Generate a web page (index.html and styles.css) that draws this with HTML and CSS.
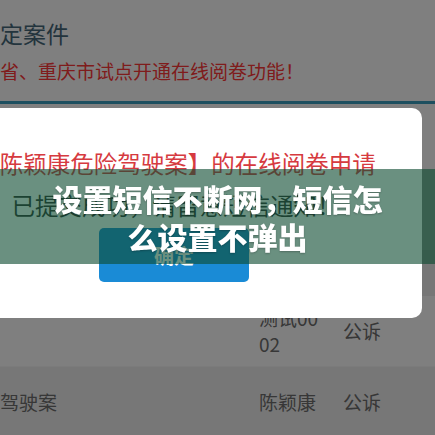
FILE: index.html
```html
<!DOCTYPE html>
<html lang="zh-CN">

<head>
    <meta charset="UTF-8">
    <meta name="viewport" content="width=device-width, initial-scale=1.0">
    <title>设置短信不断网，短信怎么设置不弹出</title>
    <link rel="stylesheet" href="styles.css">
</head>

<body>

    <div class="pagina">
        <h2 class="titulo">定案件</h2>
        <p class="aviso">省、重庆市试点开通在线阅卷功能！</p>
        <div class="linha"></div>

        <div class="tabela">
            <div class="linha-tabela cabecalho">
                <span>案件名称</span>
                <span>被告人</span>
                <span>类型</span>
            </div>
            <div class="linha-tabela">
                <span></span>
                <span class="nome">测试0002</span>
                <span>公诉</span>
            </div>
            <div class="linha-tabela alternada">
                <span>驾驶案</span>
                <span class="nome">陈颖康</span>
                <span>公诉</span>
            </div>
        </div>
    </div>

    <div class="mascara"></div>

    <div class="dialogo">
        <p class="mensagem">
            <span class="destaque">【陈颖康危险驾驶案】的在线阅卷申请</span><br>
            已提交成功，请留意短信通知！
        </p>
        <button class="btn-confirmar">确定</button>
    </div>

    <div class="faixa">
        <h1>设置短信不断网，短信怎么设置不弹出</h1>
    </div>

</body>

</html>
```

FILE: styles.css
```css
html,
body {
    margin: 0;
    height: 100%;
    overflow: hidden;
}

body {
    background-color: #fff;
    font-family: "Noto Sans CJK SC", "Noto Sans", sans-serif;
}

.pagina {
    height: 435px;
    overflow: hidden;
}

.titulo {
    margin: 0;
    padding-top: 13px;
    font-size: 23px;
    font-weight: normal;
    line-height: 40px;
    color: #46687a;
}

.aviso {
    margin: 3px 0 0;
    font-size: 19px;
    line-height: 30px;
    color: #ff3838;
}

.linha {
    margin-top: 15px;
    height: 3px;
    background-color: #3a9ebe;
}

.tabela {
    margin-top: 146px;
}

.linha-tabela {
    display: grid;
    grid-template-columns: 259px 84px 1fr;
    align-items: center;
    height: 70px;
    font-size: 19px;
    line-height: 26px;
    color: #6e6e6e;
}

.linha-tabela .nome {
    width: 64px;
    word-break: break-all;
}

.cabecalho {
    height: 46px;
    background-color: #eee;
}

.alternada {
    height: 69px;
    background-color: #eee;
    border-top: 1px solid #f6f6f6;
}

.mascara {
    position: fixed;
    top: 0;
    left: 0;
    right: 0;
    bottom: 0;
    background-color: rgba(0, 0, 0, 0.5);
}

/* caixa de aviso, centrada fora da tela à esquerda */
.dialogo {
    position: absolute;
    left: -74px;
    top: 108px;
    width: 496px;
    height: 210px;
    box-sizing: border-box;
    padding-top: 34px;
    background-color: #fff;
    border-radius: 10px;
    text-align: center;
}

.mensagem {
    margin: 0;
    padding-left: 4px;
    font-size: 23.5px;
    line-height: 42px;
    color: #333;
    white-space: nowrap;
}

.destaque {
    color: #d63a40;
}

.btn-confirmar {
    display: block;
    margin: 2px auto 0;
    width: 150px;
    height: 54px;
    border: none;
    border-radius: 5px;
    background-color: #1a8bd6;
    color: #fff;
    font-family: inherit;
    font-size: 20px;
    font-weight: bold;
}

.faixa {
    position: absolute;
    left: 0;
    top: 169px;
    width: 100%;
    height: 95px;
    display: flex;
    align-items: center;
    justify-content: center;
    background-color: rgba(15, 76, 50, 0.62);
}

.faixa h1 {
    margin: 0;
    padding: 0 50px;
    font-size: 30px;
    font-weight: 900;
    line-height: 38px;
    color: #fff;
    text-align: center;
    text-shadow: 0 1px 2px rgba(0, 0, 0, 0.25);
}
```
